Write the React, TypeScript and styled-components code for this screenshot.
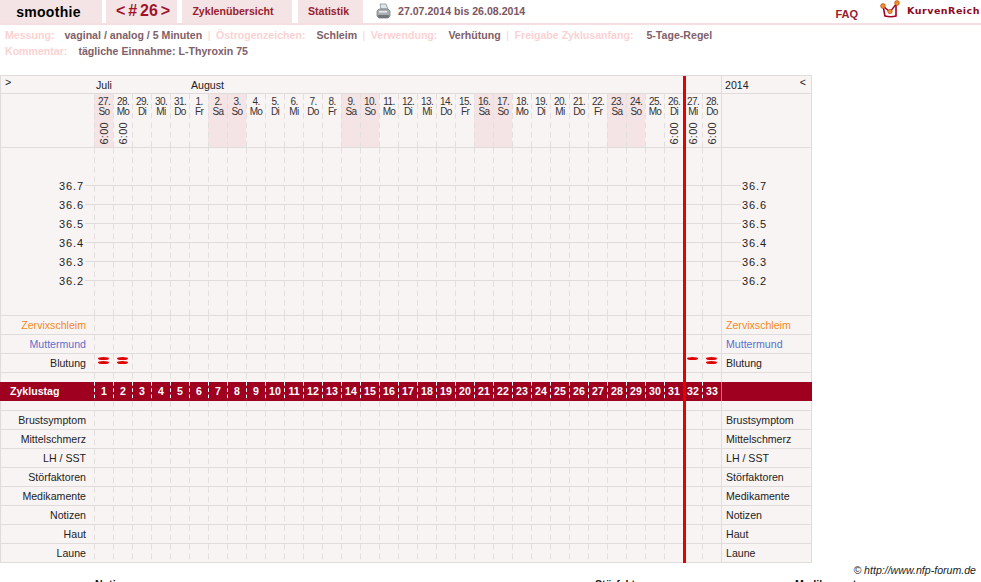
import React from "react";
import styled, { createGlobalStyle } from "styled-components";

const GlobalStyle = createGlobalStyle`
  html, body {
    margin: 0;
    padding: 0;
    background: #fff;
    overflow: hidden;
    font-family: "Liberation Sans", Arial, sans-serif;
    font-size: 10.6px;
  }
`;

const Page = styled.div`
  width: 981px;
  height: 582px;
  overflow: hidden;
`;

const Header = styled.header`
  display: flex;
  height: 25px;
  box-sizing: border-box;
  border-bottom: 2px solid #f4dfe1;
`;

const Tab = styled.div<{ $w: number; $gap: number; $nudge?: number }>`
  width: ${(p) => p.$w}px;
  margin-right: ${(p) => p.$gap}px;
  background: #f4e4e6;
  color: #98202f;
  font-weight: bold;
  font-size: 10.6px;
  display: flex;
  align-items: center;
  justify-content: center;
  padding: 0 ${(p) => p.$nudge ?? 0}px 2px 0;
  box-sizing: border-box;
`;

const BrandTab = styled(Tab)`
  color: #000;
  font-size: 14px;
  letter-spacing: 0.3px;
  padding: 0 5px 0 0;
`;

const CycleTab = styled(Tab)`
  font-size: 16px;
  word-spacing: -1.5px;
  padding: 0 0 1px 3px;
  color: #a0142a;
`;

const PrintBox = styled.div`
  margin-left: 7px;
  display: flex;
  align-items: center;
  gap: 7px;
  color: #7c5560;
  font-weight: bold;
  font-size: 10.6px;
  padding-bottom: 1px;
`;

const HeaderRight = styled.div`
  margin-left: auto;
  display: flex;
  align-items: flex-start;
  color: #98202f;
  font-weight: bold;
`;

const Faq = styled.span`
  margin: 8px 22px 0 0;
  font-size: 11px;
`;

const Brand = styled.span`
  margin: 5px 1px 0 7px;
  font-family: "DejaVu Sans", sans-serif;
  font-size: 9.5px;
  color: #8c0a1e;
  letter-spacing: 0.5px;
`;

const Info = styled.div`
  padding: 2px 0 0 5px;
  height: 50px;
  box-sizing: border-box;
  line-height: 16px;
  font-size: 10.6px;
  font-weight: bold;
  color: #80606a;
`;

const InfoLine = styled.div`
  white-space: nowrap;
`;

const Key = styled.span<{ $gap?: number }>`
  color: #fbd2d2;
  margin-right: ${(p) => p.$gap ?? 11}px;
`;

const Value = styled.span`
  color: #80606a;
`;

const Pipe = styled.span`
  color: #fbd2d2;
  font-weight: normal;
  margin: 0 5.5px;
`;

const Board = styled.div`
  position: relative;
  width: 812px;
  background: #f9f4f4;
  border-top: 1px solid #e0dcdc;
`;

const Row = styled.div<{ $h: number; $line?: boolean }>`
  display: grid;
  grid-template-columns: 93px repeat(33, 19px) 1fr;
  height: ${(p) => p.$h}px;
  box-sizing: border-box;
  border-bottom: ${(p) => (p.$line === false ? "none" : "1px solid #e0dcdc")};
  border-left: 1px solid #e0dcdc;
  border-right: 1px solid #e0dcdc;
`;

const BandRow = styled(Row)`
  background: #a00020;
  color: #fff;
  font-weight: bold;
  border-color: #a00020;
`;

const Stub = styled.div`
  padding-right: 8px;
  text-align: right;
  line-height: 18px;
  color: #222;
  white-space: nowrap;
`;

const Side = styled.div`
  padding-left: 4px;
  line-height: 18px;
  color: #222;
  border-left: 1px solid #e0dcdc;
  white-space: nowrap;
`;

const tone = (p: { $tone?: string }) =>
  p.$tone === "orange" ? "#f28a1e" : p.$tone === "blue" ? "#5a70cc" : "#222";

const RowLabel = styled(Stub)<{ $tone?: string }>`
  color: ${tone};
`;

const SideLabel = styled(Side)<{ $tone?: string }>`
  color: ${tone};
`;

const Cell = styled.div<{ $shade?: boolean }>`
  background-color: ${(p) => (p.$shade ? "#f4e4e6" : "transparent")};
  background-image: linear-gradient(to bottom, #e2dfdd 6px, transparent 6px);
  background-size: 1px 9.5px;
  background-repeat: repeat-y;
  background-position: left top;
  position: relative;
`;

const MonthLabel = styled.div<{ $span: number }>`
  grid-column: span ${(p) => p.$span};
  padding: 3px 0 0 2px;
  color: #222;
  line-height: 13px;
`;

const Arrow = styled.div`
  padding: 0 0 0 4px;
  line-height: 13px;
  color: #222;
`;

const YearCell = styled(Side)`
  display: flex;
  justify-content: space-between;
  padding: 3px 5px 0 3px;
  line-height: 13px;
`;

const BackArrow = styled.span`
  margin-top: -3px;
`;

const DayHead = styled(Cell)`
  text-align: center;
  color: #333;
  font-size: 10px;
  line-height: 9.5px;
  letter-spacing: -0.6px;
  padding: 3px 0 0 1px;
  box-sizing: border-box;
`;

const Time = styled.div`
  writing-mode: vertical-rl;
  transform: rotate(180deg);
  position: absolute;
  left: 5px;
  top: 28px;
  font-size: 11px;
  letter-spacing: 0.3px;
  line-height: 11px;
`;

const TempOverlay = styled.div`
  position: absolute;
  left: 0;
  top: 0;
  width: 100%;
  padding-top: 28px;
  display: flex;
  flex-direction: column;
  pointer-events: none;
`;

const TempRow = styled.div`
  display: flex;
  align-items: center;
  height: 19px;
  padding-left: 59px;
  font-size: 11px;
  letter-spacing: 0.9px;
  color: #222;
`;

const TempRule = styled.div`
  width: 656px;
  height: 1px;
  margin: 0 1px;
  background: #e0dcdc;
`;

const ChartWrap = styled.div`
  position: relative;
`;

const BleedMark = styled.div`
  position: absolute;
  left: 4px;
  top: 3px;
  width: 11px;
  display: flex;
  flex-direction: column;
  gap: 1px;
`;

const BleedBar = styled.div`
  height: 3px;
  background: #e00000;
  border-radius: 50% / 50%;
`;

const BandNumber = styled.div`
  text-align: center;
  line-height: 18px;
  padding-left: 1px;
  box-sizing: border-box;
  background-image: linear-gradient(to bottom, #ffffff 4px, transparent 4px);
  background-size: 1px 6.3px;
  background-repeat: repeat-y;
  background-position: left top;
`;

const BandLabel = styled.div`
  padding-left: 9px;
  line-height: 18px;
`;

const BandSide = styled.div`
  border-left: 1px solid #c8707f;
`;

const RedLine = styled.div`
  position: absolute;
  left: 683px;
  top: 0;
  bottom: 0;
  width: 3px;
  background: #e60000;
`;

const Copyright = styled.div`
  text-align: right;
  padding-right: 5px;
  font-style: italic;
  font-size: 10.6px;
  line-height: 14px;
  color: #222;
`;

const NotesRow = styled.div`
  display: grid;
  grid-template-columns: 595px 200px 1fr;
  margin-top: 1px;
  font-weight: bold;
  font-size: 10.6px;
  color: #111;
  line-height: 13px;
`;

const NoteTitle = styled.div<{ $indent?: number }>`
  padding-left: ${(p) => p.$indent ?? 0}px;
`;

const PrinterIcon = () => (
  <svg width="15" height="17" viewBox="0 0 15 17">
    <path d="M4 1h6l2 5H5z" fill="#dfe6ea" stroke="#8a9298" strokeWidth="0.8" />
    <path d="M1 8l2-2h9l2 2v5l-2 2H3l-2-2z" fill="#a9aeb2" stroke="#7c8286" strokeWidth="0.8" />
    <path d="M2 12h11v2l-1 1H3l-1-1z" fill="#70767a" />
    <rect x="3" y="8" width="8" height="1.5" fill="#e8ecee" />
  </svg>
);

const LogoIcon = () => (
  <svg width="20" height="18" viewBox="0 0 20 18">
    <path d="M3 6c1 3 1 6 2 10 4 1 8 1 11 0V5" fill="none" stroke="#a00020" strokeWidth="1.6" />
    <path d="M3 6l7 6 7-9" fill="none" stroke="#a00020" strokeWidth="1.3" />
    <circle cx="3" cy="6" r="2.4" fill="#f0902a" stroke="#b04010" strokeWidth="0.6" />
    <circle cx="10" cy="11.5" r="2.2" fill="#f0902a" stroke="#b04010" strokeWidth="0.6" />
    <circle cx="17" cy="3" r="2.4" fill="#f0902a" stroke="#b04010" strokeWidth="0.6" />
  </svg>
);

const weekdays = ["So", "Mo", "Di", "Mi", "Do", "Fr", "Sa"];
const days = Array.from({ length: 33 }, (_, i) => ({
  date: i < 5 ? 27 + i : i - 4,
  weekday: weekdays[i % 7],
  shade: i === 0 || i % 7 === 6 || (i % 7 === 0 && i > 0),
  time: [0, 1, 30, 31, 32].includes(i),
}));

const temps = ["36.7", "36.6", "36.5", "36.4", "36.3", "36.2"];
const topRows = [
  { label: "Zervixschleim", tone: "orange" },
  { label: "Muttermund", tone: "blue" },
  { label: "Blutung" },
];
const bottomRows = [
  "Brustsymptom",
  "Mittelschmerz",
  "LH / SST",
  "Störfaktoren",
  "Medikamente",
  "Notizen",
  "Haut",
  "Laune",
];

// how many bars each bleeding day shows
const bleeding: Record<number, number> = { 0: 2, 1: 2, 31: 1, 32: 2 };

const emptyCells = () => days.map((d) => <Cell key={d.date + d.weekday} />);

export default function App() {
  return (
    <Page>
      <GlobalStyle />
      <Header>
        <BrandTab $w={102} $gap={4}>smoothie</BrandTab>
        <CycleTab $w={71} $gap={5}>&lt; # 26 &gt;</CycleTab>
        <Tab $w={110} $gap={6} $nudge={8}>Zyklenübersicht</Tab>
        <Tab $w={65} $gap={6} $nudge={4}>Statistik</Tab>
        <PrintBox>
          <PrinterIcon />
          27.07.2014 bis 26.08.2014
        </PrintBox>
        <HeaderRight>
          <Faq>FAQ</Faq>
          <LogoIcon />
          <Brand>KurvenReich</Brand>
        </HeaderRight>
      </Header>
      <Info>
        <InfoLine>
          <Key $gap={10}>Messung:</Key>
          <Value>vaginal / analog / 5 Minuten</Value>
          <Pipe>|</Pipe>
          <Key>Östrogenzeichen:</Key>
          <Value>Schleim</Value>
          <Pipe>|</Pipe>
          <Key>Verwendung:</Key>
          <Value>Verhütung</Value>
          <Pipe>|</Pipe>
          <Key $gap={13}>Freigabe Zyklusanfang:</Key>
          <Value>5-Tage-Regel</Value>
        </InfoLine>
        <InfoLine>
          <Key>Kommentar:</Key>
          <Value>tägliche Einnahme: L-Thyroxin 75</Value>
        </InfoLine>
      </Info>
      <Board>
        <Row $h={18}>
          <Arrow>&gt;</Arrow>
          <MonthLabel $span={5}>Juli</MonthLabel>
          <MonthLabel $span={28}>August</MonthLabel>
          <YearCell>
            <span>2014</span>
            <BackArrow>&lt;</BackArrow>
          </YearCell>
        </Row>
        <Row $h={54}>
          <Stub />
          {days.map((d) => (
            <DayHead key={d.date + d.weekday} $shade={d.shade}>
              {d.date}.
              <br />
              {d.weekday}
              {d.time && <Time>6:00</Time>}
            </DayHead>
          ))}
          <Side />
        </Row>
        <ChartWrap>
          <Row $h={168}>
            <Stub />
            {emptyCells()}
            <Side />
          </Row>
          <TempOverlay>
            {temps.map((t) => (
              <TempRow key={t}>
                {t}
                <TempRule />
                {t}
              </TempRow>
            ))}
          </TempOverlay>
        </ChartWrap>
        {topRows.map((r) => (
          <Row $h={19} key={r.label}>
            <RowLabel $tone={r.tone}>{r.label}</RowLabel>
            {days.map((d, i) => (
              <Cell key={d.date + d.weekday}>
                {r.label === "Blutung" && bleeding[i] && (
                  <BleedMark>
                    {Array.from({ length: bleeding[i] }, (_, n) => (
                      <BleedBar key={n} />
                    ))}
                  </BleedMark>
                )}
              </Cell>
            ))}
            <SideLabel $tone={r.tone}>{r.label}</SideLabel>
          </Row>
        ))}
        <Row $h={9} $line={false}>
          <Stub />
          {emptyCells()}
          <Side />
        </Row>
        <BandRow $h={19} $line={false}>
          <BandLabel>Zyklustag</BandLabel>
          {days.map((d, i) => (
            <BandNumber key={d.date + d.weekday}>{i + 1}</BandNumber>
          ))}
          <BandSide />
        </BandRow>
        <Row $h={10}>
          <Stub />
          {emptyCells()}
          <Side />
        </Row>
        {bottomRows.map((label) => (
          <Row $h={19} key={label}>
            <RowLabel>{label}</RowLabel>
            {emptyCells()}
            <SideLabel>{label}</SideLabel>
          </Row>
        ))}
        <RedLine />
      </Board>
      <Copyright>© http://www.nfp-forum.de</Copyright>
      <NotesRow>
        <NoteTitle $indent={95}>Notizen</NoteTitle>
        <NoteTitle>Störfaktoren</NoteTitle>
        <NoteTitle>Medikamente</NoteTitle>
      </NotesRow>
    </Page>
  );
}
